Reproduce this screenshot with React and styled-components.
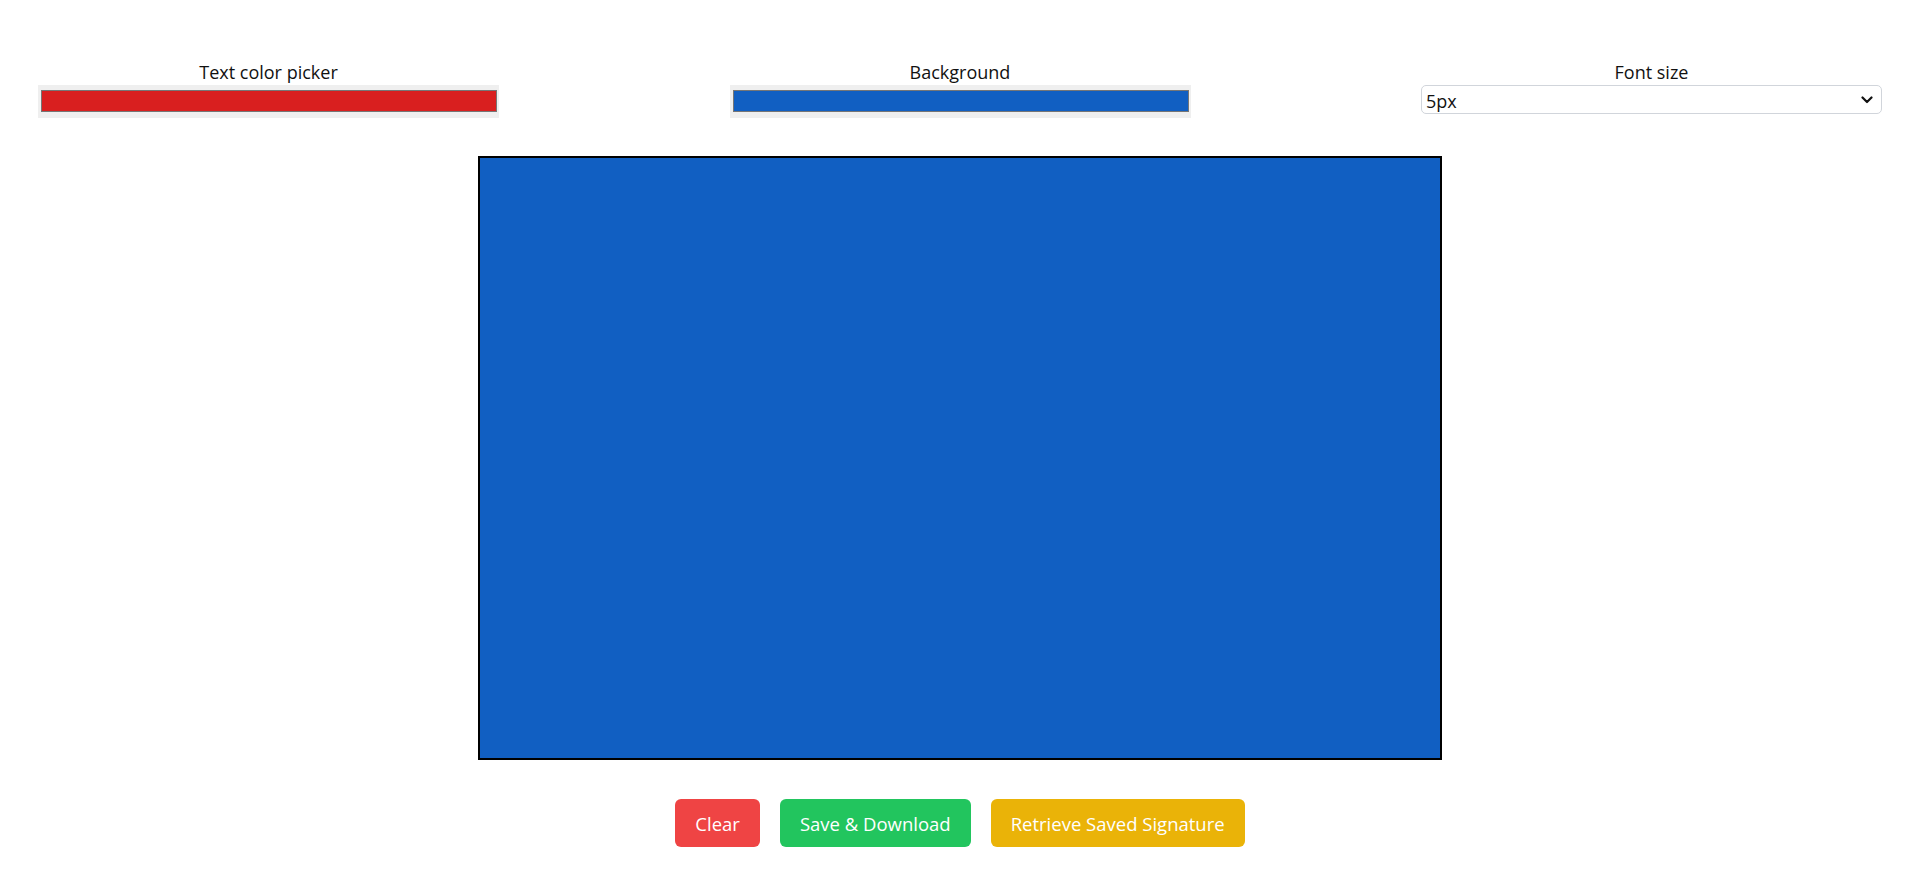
import React, { useState } from 'react';
import styled, { createGlobalStyle } from 'styled-components';

const GlobalStyle = createGlobalStyle`
	body {
		margin: 0;
		background: #fff;
		font-family: "Open Sans", "Noto Sans", sans-serif;
		color: #111;
	}
`;

const Page = styled.div`
	padding: 58px 38px 40px;
`;

const Controls = styled.div`
	display: flex;
	justify-content: space-between;
	align-items: flex-start;
`;

const Field = styled.div`
	display: flex;
	flex-direction: column;
	align-items: center;
	width: 461px;
`;

const Label = styled.label`
	padding-top: 1px;
	font-size: 18px;
	line-height: 26px;
	color: #111;
`;

const ColorInput = styled.input`
	display: block;
	width: 461px;
	height: 33px;
	padding: 0;
	margin: 0;
	border: none;
	background: #efefef;
	cursor: pointer;

	&::-webkit-color-swatch-wrapper {
		padding: 5px 2px 6px 3px;
	}

	&::-webkit-color-swatch {
		border: 1px solid #767676;
		border-radius: 0;
	}
`;

const SelectWrap = styled.div`
	position: relative;
	width: 461px;
`;

const Select = styled.select`
	appearance: none;
	display: block;
	width: 100%;
	height: 29px;
	margin: 0;
	padding: 2px 24px 0 4px;
	font-family: inherit;
	font-size: 18px;
	color: #111;
	background: #fff;
	border: 1px solid #d1d5db;
	border-radius: 5px;
	outline: none;
`;

const Chevron = styled.svg`
	position: absolute;
	right: 9px;
	top: 11px;
	pointer-events: none;
`;

const Board = styled.canvas`
	display: block;
	margin: 38px auto 0;
	width: 960px;
	height: 600px;
	border: 2px solid #000;
	background: ${p => p.$bg};
`;

const Actions = styled.div`
	display: flex;
	justify-content: center;
	gap: 20px;
	margin-top: 39px;
`;

const Button = styled.button`
	height: 48px;
	padding: 0 20px;
	font-family: inherit;
	font-size: 18.5px;
	color: #fff;
	background: ${p => p.$color};
	border: none;
	border-radius: 6px;
	cursor: pointer;
`;

const App = () => {
	const [textColor, setTextColor] = useState('#d91f1f');
	const [bg, setBg] = useState('#115fc2');
	const [size, setSize] = useState('5px');

	return (
		<Page>
			<GlobalStyle />
			<Controls>
				<Field>
					<Label>Text color picker</Label>
					<ColorInput type="color" value={textColor} onChange={e => setTextColor(e.target.value)} />
				</Field>
				<Field>
					<Label>Background</Label>
					<ColorInput type="color" value={bg} onChange={e => setBg(e.target.value)} />
				</Field>
				<Field>
					<Label>Font size</Label>
					<SelectWrap>
						<Select value={size} onChange={e => setSize(e.target.value)}>
							{['5px', '10px', '20px', '30px', '40px', '50px'].map(s => (
								<option key={s} value={s}>{s}</option>
							))}
						</Select>
						<Chevron width="12" height="8" viewBox="0 0 12 8">
							<path d="M1.5 1.5 L6 6 L10.5 1.5" fill="none" stroke="#111" strokeWidth="2.2" strokeLinecap="round" strokeLinejoin="round" />
						</Chevron>
					</SelectWrap>
				</Field>
			</Controls>
			<Board $bg={bg} width={960} height={600} />
			<Actions>
				<Button $color="#ef4444">Clear</Button>
				<Button $color="#22c55e">Save &amp; Download</Button>
				<Button $color="#eab308">Retrieve Saved Signature</Button>
			</Actions>
		</Page>
	);
};

export default App;
